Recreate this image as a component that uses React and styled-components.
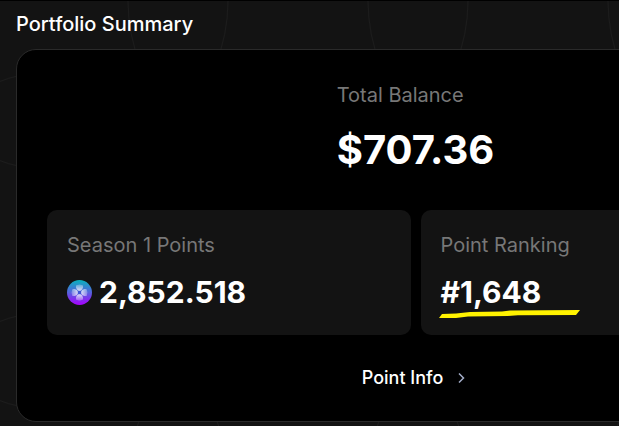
import React from "react";
import styled, { createGlobalStyle } from "styled-components";

const GlobalStyle = createGlobalStyle`
  * {
    box-sizing: border-box;
  }

  body {
    margin: 0;
    background: #131313;
    color: #fff;
    font-family: Inter, sans-serif;
    overflow: hidden;
  }
`;

const Page = styled.main`
  position: relative;
  min-height: 100vh;
  padding: 8px 16px 4px;
  border-top: 1px solid #000;
  overflow: hidden;
`;

const Backdrop = styled.svg`
  position: absolute;
  inset: 0;
  width: 100%;
  height: 100%;
`;

const Content = styled.div`
  position: relative;
  width: 100%;
  min-width: 799px;
`;

const Title = styled.h1`
  margin: 0 0 10px;
  font-size: 20px;
  font-weight: 500;
  line-height: 30px;
`;

const Card = styled.section`
  display: flex;
  flex-direction: column;
  align-items: center;
  padding: 30px;
  background: #000;
  border: 1px solid #2a2a2a;
  border-radius: 20px;
`;

const Balance = styled.div`
  margin-bottom: 30px;
`;

const Label = styled.p`
  margin: 0;
  color: #777;
  font-size: 20px;
  line-height: 30px;
`;

const Value = styled.p`
  display: flex;
  align-items: center;
  gap: 7px;
  margin: ${({ $large }) => ($large ? "10px 0 0" : "12px 0 0")};
  font-size: ${({ $large }) => ($large ? "40px" : "30px")};
  font-weight: 700;
  line-height: ${({ $large }) => ($large ? "60px" : "40px")};
`;

const Stats = styled.div`
  display: grid;
  grid-template-columns: 1fr 1fr;
  gap: 10px;
  width: 100%;
`;

const Stat = styled.div`
  padding: 20px 20px 23px;
  background: #131313;
  border-radius: 10px;
`;

const Marked = styled.span`
  position: relative;
`;

const Marker = styled.svg`
  position: absolute;
  left: -3px;
  top: 38px;
  width: 142px;
  height: 10px;
`;

const InfoButton = styled.button`
  display: flex;
  align-items: center;
  gap: 12px;
  margin-top: 30px;
  padding: 0;
  background: none;
  border: 0;
  color: #fff;
  font: 500 18px/26px Inter, sans-serif;
  cursor: pointer;
`;

const Circles = () => (
  <Backdrop aria-hidden="true">
    <defs>
      <pattern id="circles" x="58" y="0" width="240" height="240" patternUnits="userSpaceOnUse">
        <g fill="none" stroke="#1c1c1c">
          <circle cx="0" cy="0" r="170" />
          <circle cx="240" cy="0" r="170" />
          <circle cx="0" cy="240" r="170" />
          <circle cx="240" cy="240" r="170" />
        </g>
      </pattern>
    </defs>
    <rect width="100%" height="100%" fill="url(#circles)" />
  </Backdrop>
);

const PointIcon = () => (
  <svg width="25" height="25" viewBox="0 0 25 25" aria-hidden="true">
    <defs>
      <linearGradient id="coin" x1="0" y1="0" x2="0" y2="1">
        <stop offset="0" stopColor="#08b3bd" />
        <stop offset="0.5" stopColor="#5662dd" />
        <stop offset="1" stopColor="#a800ff" />
      </linearGradient>
      <linearGradient id="petal" x1="0" y1="0" x2="0" y2="1">
        <stop offset="0" stopColor="#fff" stopOpacity="0.25" />
        <stop offset="1" stopColor="#fff" stopOpacity="0.8" />
      </linearGradient>
    </defs>
    <circle cx="12.5" cy="12.5" r="12.5" fill="url(#coin)" />
    {[0, 90, 180, 270].map((angle) => (
      <path
        key={angle}
        d="M9 6.2Q9 4.6 10.6 5Q12.5 4 14.4 5Q16 4.6 16 6.2V7.6Q15.8 9.6 13.4 11H11.6Q9.2 9.6 9 7.6Z"
        fill="url(#petal)"
        transform={`rotate(${angle} 12.5 12.5)`}
      />
    ))}
    <path d="M10.8 10.8H14.2V14.2H10.8Z" fill="#3f55d4" />
  </svg>
);

const App = () => {
  return (
    <>
      <GlobalStyle />
      <Page>
        <Circles />
        <Content>
          <Title>Portfolio Summary</Title>
          <Card>
            <Balance>
              <Label>Total Balance</Label>
              <Value $large>$707.36</Value>
            </Balance>

            <Stats>
              <Stat>
                <Label>Season 1 Points</Label>
                <Value>
                  <PointIcon />
                  2,852.518
                </Value>
              </Stat>
              <Stat>
                <Label>Point Ranking</Label>
                <Value>
                  <Marked>
                    #1,648
                    <Marker viewBox="0 0 142 10" aria-hidden="true">
                      <path
                        d="M4 4L18 3.5L32 2L64 1.5L72 0.5L142 0L138 5L80 5.2L70 6L30 6.5L18 8L1 8Z"
                        fill="#fff200"
                      />
                    </Marker>
                  </Marked>
                </Value>
              </Stat>
            </Stats>

            <InfoButton type="button">
              Point Info
              <svg width="14" height="14" viewBox="0 0 14 14" fill="none" aria-hidden="true">
                <path d="M4 2.5L8.5 7L4 11.5" stroke="#a3adc8" strokeWidth="1.5" />
              </svg>
            </InfoButton>
          </Card>
        </Content>
      </Page>
    </>
  );
};

export default App;
